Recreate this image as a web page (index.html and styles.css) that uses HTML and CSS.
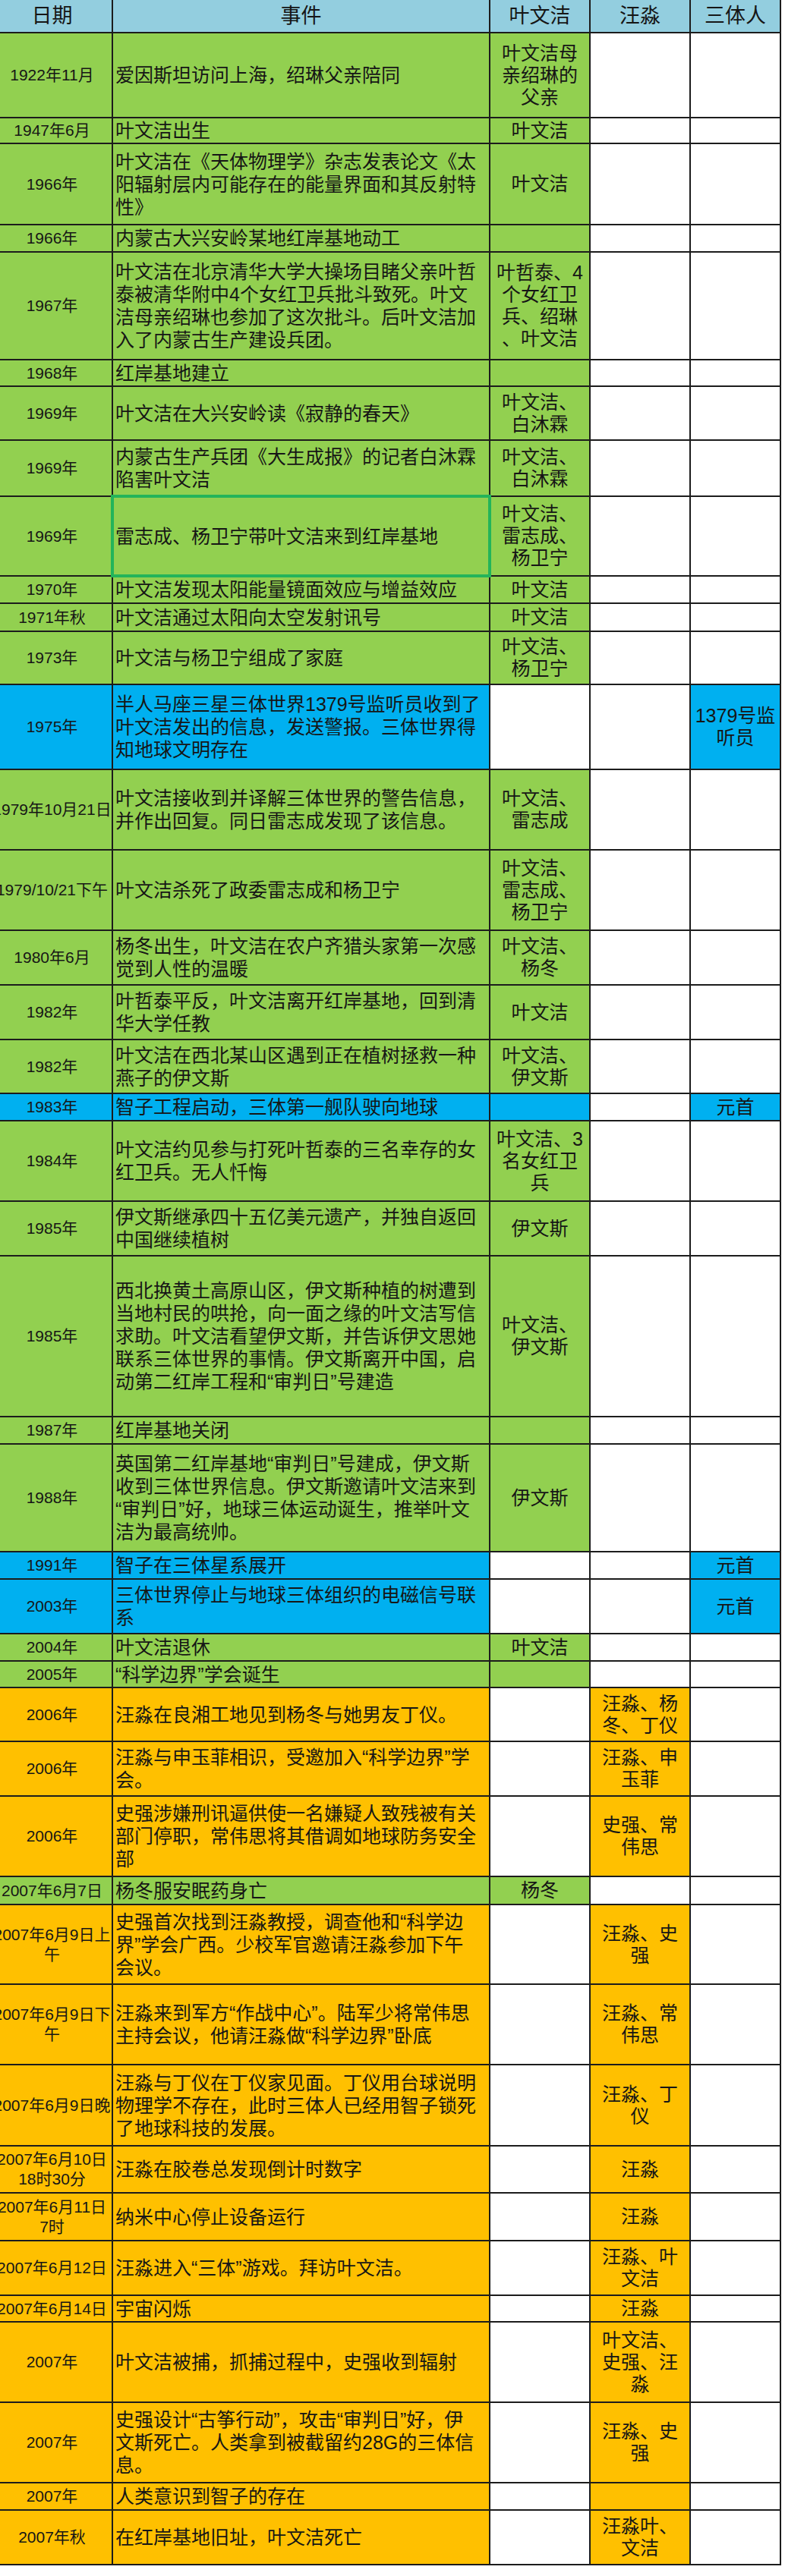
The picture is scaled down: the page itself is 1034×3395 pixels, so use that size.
FILE: index.html
```html
<!DOCTYPE html>
<html lang="zh-CN">
<head>
<meta charset="utf-8">
<title>三体 时间线</title>
<link rel="stylesheet" href="styles.css">
</head>
<body>
<table class="timeline">
  <colgroup>
    <col class="c-date"><col class="c-event"><col class="c-ye"><col class="c-wang"><col class="c-san">
  </colgroup>
  <thead>
    <tr class="h43"><th>日期</th><th>事件</th><th>叶文洁</th><th>汪淼</th><th>三体人</th></tr>
  </thead>
  <tbody>
    <tr class="h112 green"><td class="date">1922年11月</td><td class="event">爱因斯坦访问上海，绍琳父亲陪同</td><td class="name">叶文洁母<br>亲绍琳的<br>父亲</td><td></td><td></td></tr>
    <tr class="h34 green"><td class="date">1947年6月</td><td class="event">叶文洁出生</td><td class="name">叶文洁</td><td></td><td></td></tr>
    <tr class="h107 green"><td class="date">1966年</td><td class="event">叶文洁在《天体物理学》杂志发表论文《太<br>阳辐射层内可能存在的能量界面和其反射特<br>性》</td><td class="name">叶文洁</td><td></td><td></td></tr>
    <tr class="h36 green"><td class="date">1966年</td><td class="event">内蒙古大兴安岭某地红岸基地动工</td><td class="name"></td><td></td><td></td></tr>
    <tr class="h142 green"><td class="date">1967年</td><td class="event">叶文洁在北京清华大学大操场目睹父亲叶哲<br>泰被清华附中4个女红卫兵批斗致死。叶文<br>洁母亲绍琳也参加了这次批斗。后叶文洁加<br>入了内蒙古生产建设兵团。</td><td class="name">叶哲泰、4<br>个女红卫<br>兵、绍琳<br>、叶文洁</td><td></td><td></td></tr>
    <tr class="h35 green"><td class="date">1968年</td><td class="event">红岸基地建立</td><td class="name"></td><td></td><td></td></tr>
    <tr class="h71 green"><td class="date">1969年</td><td class="event">叶文洁在大兴安岭读《寂静的春天》</td><td class="name">叶文洁、<br>白沐霖</td><td></td><td></td></tr>
    <tr class="h74 green"><td class="date">1969年</td><td class="event">内蒙古生产兵团《大生成报》的记者白沐霖<br>陷害叶文洁</td><td class="name">叶文洁、<br>白沐霖</td><td></td><td></td></tr>
    <tr class="h105 green"><td class="date">1969年</td><td class="event selected">雷志成、杨卫宁带叶文洁来到红岸基地</td><td class="name">叶文洁、<br>雷志成、<br>杨卫宁</td><td></td><td></td></tr>
    <tr class="h36 green"><td class="date">1970年</td><td class="event">叶文洁发现太阳能量镜面效应与增益效应</td><td class="name">叶文洁</td><td></td><td></td></tr>
    <tr class="h37 green"><td class="date">1971年秋</td><td class="event">叶文洁通过太阳向太空发射讯号</td><td class="name">叶文洁</td><td></td><td></td></tr>
    <tr class="h70 green"><td class="date">1973年</td><td class="event">叶文洁与杨卫宁组成了家庭</td><td class="name">叶文洁、<br>杨卫宁</td><td></td><td></td></tr>
    <tr class="h112 blue"><td class="date">1975年</td><td class="event">半人马座三星三体世界1379号监听员收到了<br>叶文洁发出的信息，发送警报。三体世界得<br>知地球文明存在</td><td></td><td></td><td class="name">1379号监<br>听员</td></tr>
    <tr class="h106 green"><td class="date">1979年10月21日</td><td class="event">叶文洁接收到并译解三体世界的警告信息，<br>并作出回复。同日雷志成发现了该信息。</td><td class="name">叶文洁、<br>雷志成</td><td></td><td></td></tr>
    <tr class="h106 green"><td class="date">1979/10/21下午</td><td class="event">叶文洁杀死了政委雷志成和杨卫宁</td><td class="name">叶文洁、<br>雷志成、<br>杨卫宁</td><td></td><td></td></tr>
    <tr class="h72 green"><td class="date">1980年6月</td><td class="event">杨冬出生，叶文洁在农户齐猎头家第一次感<br>觉到人性的温暖</td><td class="name">叶文洁、<br>杨冬</td><td></td><td></td></tr>
    <tr class="h72 green"><td class="date">1982年</td><td class="event">叶哲泰平反，叶文洁离开红岸基地，回到清<br>华大学任教</td><td class="name">叶文洁</td><td></td><td></td></tr>
    <tr class="h71 green"><td class="date">1982年</td><td class="event">叶文洁在西北某山区遇到正在植树拯救一种<br>燕子的伊文斯</td><td class="name">叶文洁、<br>伊文斯</td><td></td><td></td></tr>
    <tr class="h36 blue blue-ye"><td class="date">1983年</td><td class="event">智子工程启动，三体第一舰队驶向地球</td><td></td><td></td><td class="name">元首</td></tr>
    <tr class="h106 green"><td class="date">1984年</td><td class="event">叶文洁约见参与打死叶哲泰的三名幸存的女<br>红卫兵。无人忏悔</td><td class="name">叶文洁、3<br>名女红卫<br>兵</td><td></td><td></td></tr>
    <tr class="h72 green"><td class="date">1985年</td><td class="event">伊文斯继承四十五亿美元遗产，并独自返回<br>中国继续植树</td><td class="name">伊文斯</td><td></td><td></td></tr>
    <tr class="h212 green"><td class="date">1985年</td><td class="event">西北换黄土高原山区，伊文斯种植的树遭到<br>当地村民的哄抢，向一面之缘的叶文洁写信<br>求助。叶文洁看望伊文斯，并告诉伊文思她<br>联系三体世界的事情。伊文斯离开中国，启<br>动第二红岸工程和“审判日”号建造</td><td class="name">叶文洁、<br>伊文斯</td><td></td><td></td></tr>
    <tr class="h36 green"><td class="date">1987年</td><td class="event">红岸基地关闭</td><td class="name"></td><td></td><td></td></tr>
    <tr class="h142 green"><td class="date">1988年</td><td class="event">英国第二红岸基地“审判日”号建成，伊文斯<br>收到三体世界信息。伊文斯邀请叶文洁来到<br>“审判日”好，地球三体运动诞生，推举叶文<br>洁为最高统帅。</td><td class="name">伊文斯</td><td></td><td></td></tr>
    <tr class="h36 blue"><td class="date">1991年</td><td class="event">智子在三体星系展开</td><td></td><td></td><td class="name">元首</td></tr>
    <tr class="h72 blue"><td class="date">2003年</td><td class="event">三体世界停止与地球三体组织的电磁信号联<br>系</td><td></td><td></td><td class="name">元首</td></tr>
    <tr class="h36 green"><td class="date">2004年</td><td class="event">叶文洁退休</td><td class="name">叶文洁</td><td></td><td></td></tr>
    <tr class="h35 green"><td class="date">2005年</td><td class="event">“科学边界”学会诞生</td><td class="name"></td><td></td><td></td></tr>
    <tr class="h71 orange"><td class="date">2006年</td><td class="event">汪淼在良湘工地见到杨冬与她男友丁仪。</td><td></td><td class="name">汪淼、杨<br>冬、丁仪</td><td></td></tr>
    <tr class="h72 orange"><td class="date">2006年</td><td class="event">汪淼与申玉菲相识，受邀加入“科学边界”学<br>会。</td><td></td><td class="name">汪淼、申<br>玉菲</td><td></td></tr>
    <tr class="h106 orange"><td class="date">2006年</td><td class="event">史强涉嫌刑讯逼供使一名嫌疑人致残被有关<br>部门停职，常伟思将其借调如地球防务安全<br>部</td><td></td><td class="name">史强、常<br>伟思</td><td></td></tr>
    <tr class="h37 green"><td class="date">2007年6月7日</td><td class="event">杨冬服安眠药身亡</td><td class="name">杨冬</td><td></td><td></td></tr>
    <tr class="h105 orange"><td class="date">2007年6月9日上<br>午</td><td class="event">史强首次找到汪淼教授，调查他和“科学边<br>界”学会广西。少校军官邀请汪淼参加下午<br>会议。</td><td></td><td class="name">汪淼、史<br>强</td><td></td></tr>
    <tr class="h106 orange"><td class="date">2007年6月9日下<br>午</td><td class="event">汪淼来到军方“作战中心”。陆军少将常伟思<br>主持会议，他请汪淼做“科学边界”卧底</td><td></td><td class="name">汪淼、常<br>伟思</td><td></td></tr>
    <tr class="h107 orange"><td class="date">2007年6月9日晚</td><td class="event">汪淼与丁仪在丁仪家见面。丁仪用台球说明<br>物理学不存在，此时三体人已经用智子锁死<br>了地球科技的发展。</td><td></td><td class="name">汪淼、丁<br>仪</td><td></td></tr>
    <tr class="h62 orange"><td class="date">2007年6月10日<br>18时30分</td><td class="event">汪淼在胶卷总发现倒计时数字</td><td></td><td class="name">汪淼</td><td></td></tr>
    <tr class="h63 orange"><td class="date">2007年6月11日<br>7时</td><td class="event">纳米中心停止设备运行</td><td></td><td class="name">汪淼</td><td></td></tr>
    <tr class="h72 orange"><td class="date">2007年6月12日</td><td class="event">汪淼进入“三体”游戏。拜访叶文洁。</td><td></td><td class="name">汪淼、叶<br>文洁</td><td></td></tr>
    <tr class="h35 orange"><td class="date">2007年6月14日</td><td class="event">宇宙闪烁</td><td></td><td class="name">汪淼</td><td></td></tr>
    <tr class="h106 orange"><td class="date">2007年</td><td class="event">叶文洁被捕，抓捕过程中，史强收到辐射</td><td></td><td class="name">叶文洁、<br>史强、汪<br>淼</td><td></td></tr>
    <tr class="h106 orange"><td class="date">2007年</td><td class="event">史强设计“古筝行动”，攻击“审判日”好，伊<br>文斯死亡。人类拿到被截留约28G的三体信<br>息。</td><td></td><td class="name">汪淼、史<br>强</td><td></td></tr>
    <tr class="h36 orange"><td class="date">2007年</td><td class="event">人类意识到智子的存在</td><td></td><td class="name"></td><td></td></tr>
    <tr class="h72 orange"><td class="date">2007年秋</td><td class="event">在红岸基地旧址，叶文洁死亡</td><td></td><td class="name">汪淼叶、<br>文洁</td><td></td></tr>
  </tbody>
</table>
</body>
</html>
```

FILE: styles.css
```css
html, body {
  margin: 0;
  padding: 0;
  background: #ffffff;
}

body {
  overflow-x: hidden;
  font-family: "Liberation Sans", "Noto Sans CJK SC", sans-serif;
  color: #161616;
}

.timeline {
  border-collapse: collapse;
  table-layout: fixed;
  width: 1039px;
  margin-left: -12px;
}

.c-date { width: 159px; }
.c-event { width: 497px; }
.c-ye { width: 132px; }
.c-wang { width: 132px; }
.c-san { width: 119px; }

.timeline th,
.timeline td {
  border: 2px solid #1c1c1c;
  padding: 0 4px;
  vertical-align: middle;
  white-space: nowrap;
  overflow: hidden;
  background: #ffffff;
}

.timeline th {
  border-top: none;
  background: #93cedf;
  font-size: 27px;
  font-weight: normal;
  text-align: center;
  line-height: 30px;
}

.timeline td.date {
  padding: 0;
  text-align: center;
  font-size: 21px;
  line-height: 26px;
}

.timeline td.event {
  padding: 0 2px 0 3px;
  text-align: left;
  font-size: 25px;
  line-height: 30px;
  overflow: visible;
}

.timeline td.name {
  text-align: center;
  font-size: 25px;
  line-height: 29px;
  padding: 0 2px;
}

.timeline td.selected {
  position: relative;
}

.timeline td.selected::after {
  content: "";
  position: absolute;
  top: -3px;
  bottom: -3px;
  left: -3px;
  right: -3px;
  border: 4px solid #23b45a;
  z-index: 2;
  pointer-events: none;
}

/* row colours */
.green td:nth-child(-n+3) { background: #92d050; }
.blue td:nth-child(-n+2),
.blue td:nth-child(5),
.blue.blue-ye td:nth-child(3) { background: #00b0f0; }
.orange td:nth-child(-n+2),
.orange td:nth-child(4) { background: #ffc000; }

/* row heights */
.h34 { height: 34px; }
.h35 { height: 35px; }
.h36 { height: 36px; }
.h37 { height: 37px; }
.h43 { height: 43px; }
.h62 { height: 62px; }
.h63 { height: 63px; }
.h70 { height: 70px; }
.h71 { height: 71px; }
.h72 { height: 72px; }
.h74 { height: 74px; }
.h105 { height: 105px; }
.h106 { height: 106px; }
.h107 { height: 107px; }
.h112 { height: 112px; }
.h142 { height: 142px; }
.h212 { height: 212px; }
```
